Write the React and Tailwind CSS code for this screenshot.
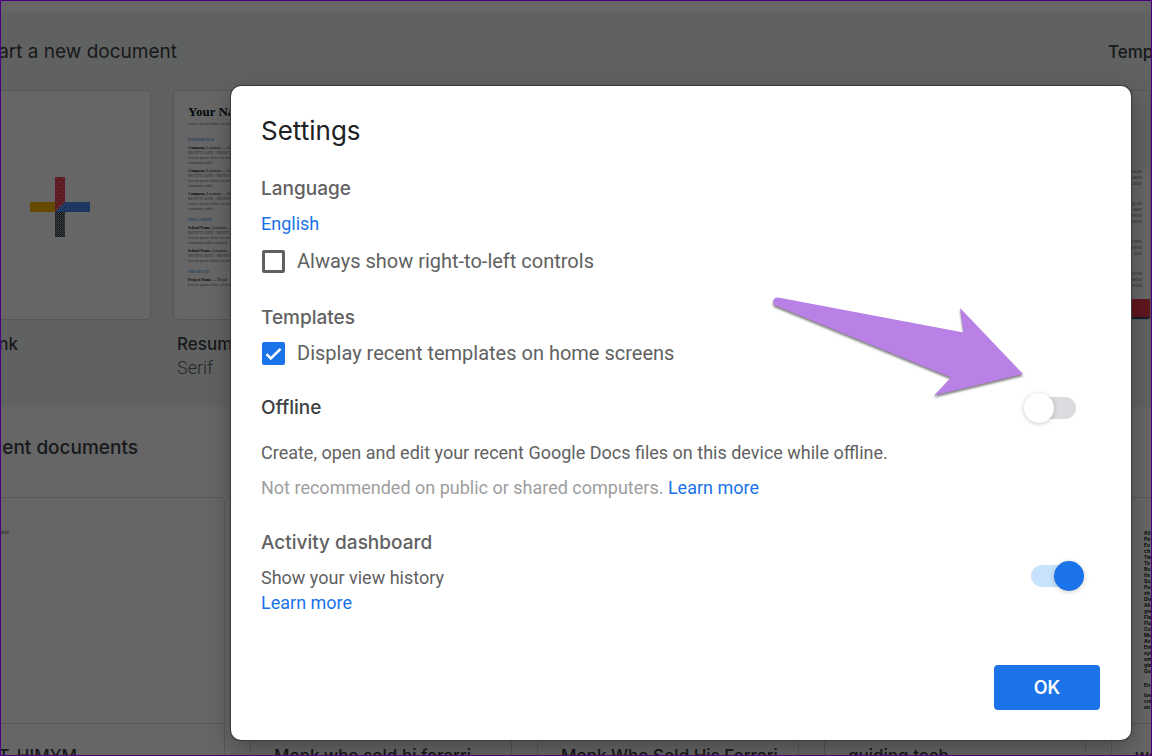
import React, { useState } from 'react';

const resumeSections = [
  {
    title: 'EXPERIENCE',
    entries: [
      ['Company,', 'Location — Job Title', 'MONTH 20XX - PRESENT', 'Lorem ipsum dolor sit amet, consectetur', 'nonummy nibh.'],
      ['Company,', 'Location — Job Title', 'MONTH 20XX - MONTH 20XX', 'Lorem ipsum dolor sit amet, consectetur', 'nonummy nibh.'],
      ['Company,', 'Location — Job Title', 'MONTH 20XX - MONTH 20XX', 'Lorem ipsum dolor sit amet, consectetur', 'nonummy nibh.'],
    ],
  },
  {
    title: 'EDUCATION',
    entries: [
      ['School Name,', 'Location — Degree', 'MONTH 20XX - MONTH 20XX', 'Lorem ipsum dolor sit amet, consectetur', 'nonummy nibh euismod'],
      ['School Name,', 'Location — Degree', 'MONTH 20XX - MONTH 20XX', 'Lorem ipsum dolor sit amet, consectetur'],
    ],
  },
  {
    title: 'PROJECTS',
    entries: [['Project Name', '— Detail', 'Lorem ipsum dolor sit amet, consectetur']],
  },
];

const noteLines = ['80', 'Pe', 'Ev', 'ch', 'Tw', 'Ta', 'Bu', 'Its', 'Su', 'Pu', 'sh', 'Die', 'Ali', 'gre', 'Fla', 'Flu', 'Co', 'Mu', 'Av', 'Em', 'syl', 'sm', 'gla', 'Go'];

const PlusLogo = () => (
  <svg viewBox="0 0 60 60" className="size-[60px]" aria-hidden="true">
    <defs>
      <pattern id="redDots" width="6" height="6" patternUnits="userSpaceOnUse">
        <rect width="6" height="6" fill="#f0485f" />
        <rect x="2" y="1" width="1" height="1" fill="#ffb000" />
        <rect x="5" y="4" width="1" height="1" fill="#ffb000" />
      </pattern>
      <pattern id="blueDots" width="4" height="4" patternUnits="userSpaceOnUse">
        <rect width="4" height="4" fill="#4285f4" />
        <rect x="1" y="1" width="1" height="1" fill="#8fb8e8" />
        <rect x="3" y="3" width="1" height="1" fill="#8fb8e8" />
      </pattern>
      <pattern id="darkDots" width="2" height="2" patternUnits="userSpaceOnUse">
        <rect width="2" height="2" fill="#39424d" />
        <rect width="1" height="1" fill="#a5abb0" />
        <rect x="1" y="1" width="1" height="1" fill="#77808a" />
      </pattern>
    </defs>
    <path d="M0 25h25v10H0z" fill="#ffb800" />
    <path d="M25 0h10v25L25 35z" fill="url(#redDots)" />
    <path d="M35 25h25v10H25z" fill="url(#blueDots)" />
    <path d="M25 35h10v25H25z" fill="url(#darkDots)" />
  </svg>
);

const ResumeThumb = () => (
  <div className="px-[14px] pt-3 font-['Liberation_Serif',serif] text-[4px] leading-[5px] whitespace-nowrap text-gray-500">
    <p className="text-[13px] leading-[18px] font-bold text-gray-900">Your Name</p>
    <p>Lorem ipsum dolor sit amet consectetur</p>
    <div className="flex flex-col gap-[6px] pt-[11px]">
      {resumeSections.map(section => (
        <section key={section.title}>
          <h3 className="text-[4px] leading-[5px] font-bold text-[#4d9fe8]">{section.title}</h3>
          {section.entries.map(([name, place, ...lines], i) => (
            <div key={i} className="pt-[3px]">
              <p className="text-gray-900"><b>{name}</b> {place}</p>
              {lines.map((line, n) => <p key={n}>{line}</p>)}
            </div>
          ))}
        </section>
      ))}
    </div>
  </div>
);

const BrochureThumb = () => (
  <div className="flex h-full flex-col text-right text-[4px] leading-[6px] text-gray-500">
    <div className="h-[78px] bg-gray-100" />
    <div className="flex flex-1 flex-col gap-[14px] pr-2">
      <p>lorem ipsum<br />dolor sit amet<br />consectetur</p>
      <p>adipiscing elit<br />sed diam<br />nonummy<br />euismod</p>
      <p>ut wisi<br />ad minim<br />quis</p>
      <p>nostrud<br />exerci tation<br />suscipit</p>
    </div>
    <div className="h-5 border-b-2 border-[#3a5070] bg-[#f0384a]" />
  </div>
);

const TemplateCard = ({ title, subtitle, children }) => (
  <div className="w-[178px] shrink-0">
    <div className="h-[230px] overflow-hidden rounded-[4px] border border-[#d5d8db] bg-white">{children}</div>
    <p className="mt-3 ml-1 text-[17px] leading-6 font-medium text-[#3c4046]">{title}</p>
    {subtitle && <p className="ml-1 font-[Roboto,sans-serif] text-[18px] leading-6 font-light text-[#5f6368]">{subtitle}</p>}
  </div>
);

const DocumentCard = ({ title, children }) => (
  <div className="w-[262px] shrink-0 rounded-[4px] border border-[#dadce0] bg-white">
    <div className="h-[226px] overflow-hidden border-b border-[#dadce0]">{children}</div>
    <p className="px-[23px] pt-5 pb-8 text-[17px] leading-6 font-medium whitespace-nowrap text-[#3c4046]">{title}</p>
  </div>
);

const DocsHome = () => (
  <div className="h-full overflow-hidden bg-white font-[Inter,sans-serif]">
    <div className="mt-[11px] h-[395px] bg-[#f1f5f3]">
      <div className="flex items-center justify-between pt-7 leading-6 whitespace-nowrap text-[#3c4046]">
        <div className="flex w-[176px] justify-end text-[19px]">Start a new document</div>
        <div className="w-[43px] text-[17px] font-medium">Template gallery</div>
      </div>
      <div className="mt-[26px] -ml-7 flex gap-[22px]">
        <TemplateCard title={<span className="flex w-[41px] justify-end">Blank</span>}>
          <div className="flex h-full items-center justify-center pt-1 pr-1"><PlusLogo /></div>
        </TemplateCard>
        <TemplateCard title="Resume" subtitle="Serif"><ResumeThumb /></TemplateCard>
        <TemplateCard />
        <TemplateCard />
        <TemplateCard />
        <TemplateCard><BrochureThumb /></TemplateCard>
      </div>
    </div>
    <div className="flex w-[137px] justify-end pt-[29px] text-[19px] leading-6 font-medium whitespace-nowrap text-[#3c4046]">Recent documents</div>
    <div className="mt-[37px] -ml-[38px] flex gap-[25px]">
      <DocumentCard title={<span className="flex w-[90px] justify-end">T_HIMYM</span>}>
        <p className="pt-8 pl-8 text-[4px] leading-[5px] text-gray-700">Theme</p>
      </DocumentCard>
      <DocumentCard title="Monk who sold hi ferarri" />
      <DocumentCard title="Monk Who Sold His Ferrari" />
      <DocumentCard title="guiding tech" />
      <DocumentCard title="word list">
        <div className="pt-8 pl-8 text-[5px] leading-[6px] font-bold text-gray-900">
          {noteLines.map(line => <p key={line}>{line}</p>)}
          <p className="mt-2">En</p>
          <p className="mt-1">lov</p>
          <p>cre</p>
          <p>an</p>
        </div>
      </DocumentCard>
    </div>
  </div>
);

const Checkbox = ({ checked, onChange, label }) => (
  <label className="flex h-6 items-center gap-3 pl-px font-[Roboto,sans-serif] text-[20px] leading-6 text-[#616161]">
    <span className="grid size-[23px] shrink-0">
      <input
        type="checkbox"
        checked={checked}
        onChange={e => onChange(e.target.checked)}
        className="col-start-1 row-start-1 size-[23px] appearance-none rounded-[2px] border-3 border-[#616161] bg-white checked:border-[#1a73e8] checked:bg-[#1a73e8]"
      />
      {checked && (
        <svg viewBox="0 0 23 23" className="pointer-events-none col-start-1 row-start-1 size-[23px]" aria-hidden="true">
          <path d="M4.5 12.2l4.3 4.3L18.6 6.8" fill="none" stroke="#fff" strokeWidth="2.6" />
        </svg>
      )}
    </span>
    {label}
  </label>
);

const Toggle = ({ checked, onChange, label }) => (
  <input
    type="checkbox"
    role="switch"
    aria-label={label}
    checked={checked}
    onChange={e => onChange(e.target.checked)}
    className="relative mr-6 h-[22px] w-[45px] shrink-0 appearance-none rounded-full bg-[#dadce0] before:absolute before:-top-1 before:-left-[7px] before:size-[30px] before:rounded-full before:bg-white before:shadow-[0_1px_4px_rgba(60,40,50,0.25)] checked:bg-[#c8e2fb] checked:before:left-[23px] checked:before:bg-[#1a73e8]"
  />
);

const Arrow = () => (
  <svg viewBox="0 0 260 110" className="pointer-events-none absolute top-[206px] right-[99px] h-[110px] w-[260px] overflow-visible drop-shadow-[0_2px_1px_rgba(40,40,40,0.6)]" aria-hidden="true">
    <path d="M6 5.500L191.500 40.500L188 16L251 82L162 103.500L179 85.500L2 13Q-1 6 6 5.500Z" fill="#b981e6" />
  </svg>
);

const SettingsDialog = () => {
  const [rtl, setRtl] = useState(false);
  const [recent, setRecent] = useState(true);
  const [offline, setOffline] = useState(false);
  const [history, setHistory] = useState(true);

  return (
    <div
      role="dialog"
      aria-labelledby="settings-title"
      className="relative flex-1 rounded-[10px] bg-white pt-[25px] pr-[31px] pb-[30px] pl-[30px] font-[Roboto,sans-serif] text-[18px] leading-6 text-[#616161] shadow-[0_0_0_1px_#3a3a3a,0_8px_24px_rgba(0,0,0,0.3)]"
    >
      <h1 id="settings-title" className="font-[Inter,sans-serif] text-[26px] leading-10 text-[#202124]">Settings</h1>

      <h2 className="mt-[26px] font-[Inter,sans-serif] text-[19px] leading-6 font-medium">Language</h2>
      <a href="#language" className="mt-[11px] block w-fit text-[#1a73e8]">English</a>
      <div className="mt-[13px]">
        <Checkbox checked={rtl} onChange={setRtl} label="Always show right-to-left controls" />
      </div>

      <h2 className="mt-[33px] font-[Inter,sans-serif] text-[19px] leading-6 font-medium">Templates</h2>
      <div className="mt-[11px]">
        <Checkbox checked={recent} onChange={setRecent} label="Display recent templates on home screens" />
      </div>

      <div className="mt-[31px] flex items-center justify-between">
        <h2 className="font-[Inter,sans-serif] text-[19px] leading-6 font-medium text-[#3c4043]">Offline</h2>
        <Toggle checked={offline} onChange={setOffline} label="Offline" />
      </div>
      <p className="mt-[21px]">Create, open and edit your recent Google Docs files on this device while offline.</p>
      <p className="mt-[11px] text-[#9e9e9e]">
        Not recommended on public or shared computers. <a href="#offline" className="text-[#1a73e8]">Learn more</a>
      </p>

      <div className="mt-[31px] flex items-start justify-between">
        <div>
          <h2 className="font-[Inter,sans-serif] text-[19px] leading-6 font-medium">Activity dashboard</h2>
          <p className="mt-[11px]">Show your view history</p>
          <a href="#activity" className="mt-px block w-fit text-[#1a73e8]">Learn more</a>
        </div>
        <div className="flex pt-[34px]">
          <Toggle checked={history} onChange={setHistory} label="Show your view history" />
        </div>
      </div>

      <div className="mt-[50px] flex justify-end">
        <button type="button" className="h-[45px] w-[106px] rounded-[4px] bg-[#1a73e8] font-[Inter,sans-serif] text-[18px] font-semibold text-white">OK</button>
      </div>

      <Arrow />
    </div>
  );
};

const App = () => (
  <div className="relative h-screen overflow-hidden border border-[#4b0082]">
    <DocsHome />
    <div className="absolute inset-0 flex items-start bg-black/60 pt-[85px] pr-5 pl-[230px]">
      <SettingsDialog />
    </div>
  </div>
);

export default App;
